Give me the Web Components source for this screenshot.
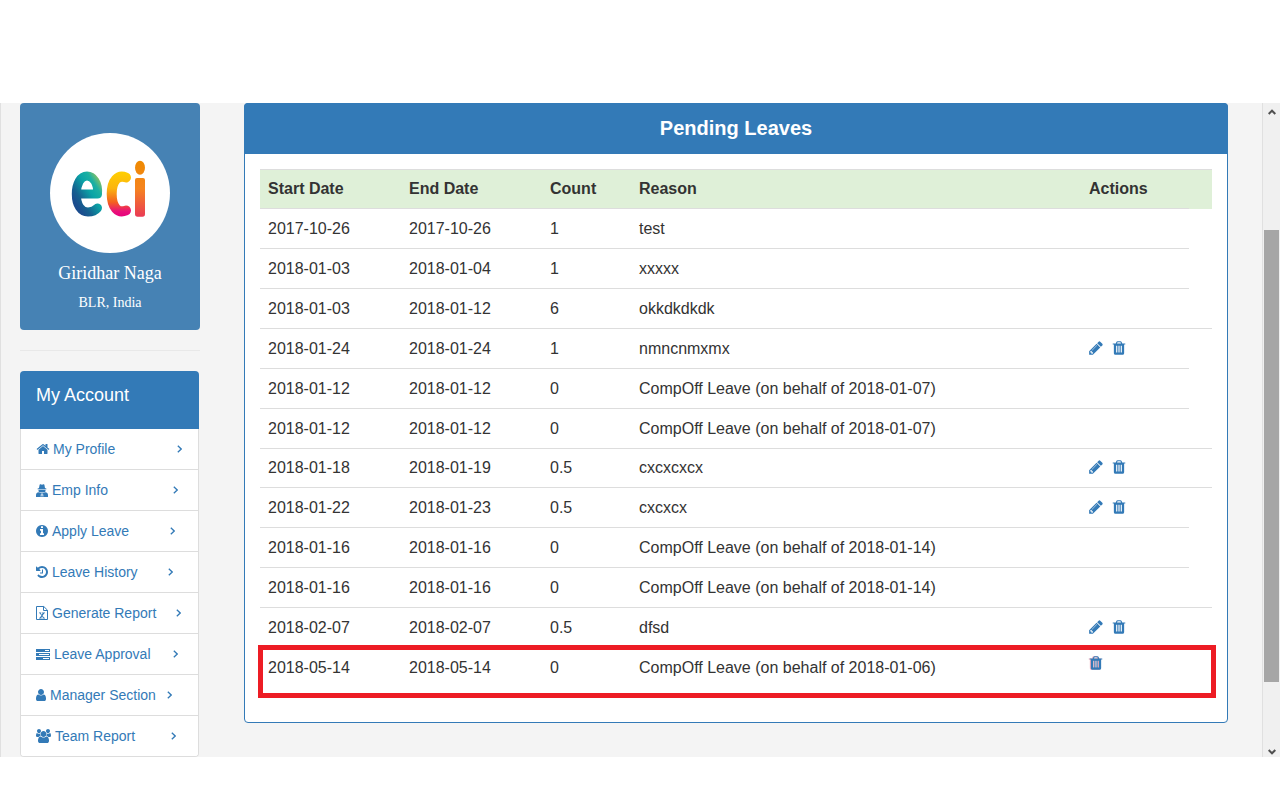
<!DOCTYPE html>
<html><head><meta charset="utf-8">
<style>
html,body{margin:0;padding:0;background:#fff;height:800px;overflow:hidden;font-family:"Liberation Sans",Arial,sans-serif;font-size:14px;color:#333}
</style></head><body>
<app-shell>
  <side-bar slot="side">
    <profile-card name="Giridhar Naga" place="BLR, India"></profile-card>
    <account-menu title="My Account">
      <menu-item icon="home" label="My Profile" right="16"></menu-item>
      <menu-item icon="secret" label="Emp Info" right="20"></menu-item>
      <menu-item icon="info" label="Apply Leave" right="23"></menu-item>
      <menu-item icon="history" label="Leave History" right="25"></menu-item>
      <menu-item icon="excel" label="Generate Report" right="17"></menu-item>
      <menu-item icon="tasks" label="Leave Approval" right="20"></menu-item>
      <menu-item icon="user" label="Manager Section" right="26"></menu-item>
      <menu-item icon="users" label="Team Report" right="22"></menu-item>
    </account-menu>
  </side-bar>
  <leaves-panel slot="main" title="Pending Leaves"></leaves-panel>
</app-shell>
<script>
const P={
home:['0 0 1792 1792','M1472 992v480q0 26-19 45t-45 19h-384v-384h-256v384h-384q-26 0-45-19t-19-45v-480q0-1 .5-3t.5-3l575-474 575 474q1 2 1 6zm223-69l-62 74q-8 9-21 11h-3q-13 0-21-7l-692-577-692 577q-12 8-24 7-13-2-21-11l-62-74q-8-10-7-23.500t11-21.500l719-599q32-26 76-26t76 26l244 204v-195q0-14 9-23t23-9h192q14 0 23 9t9 23v408l219 182q10 8 11 21.500t-7 23.500z'],
user:['0 0 1792 1792','M1536 1399q0 109-62.500 187t-150.500 78h-854q-88 0-150.500-78t-62.500-187q0-85 8.500-160.500t31.500-152 58.500-131 94-89 134.500-34.500q131 128 313 128t313-128q76 0 134.500 34.500t94 89 58.500 131 31.500 152 8.500 160.500zm-256-887q0 159-112.500 271.500t-271.500 112.500-271.500-112.500-112.500-271.500 112.500-271.500 271.500-112.500 271.500 112.500 112.500 271.500z'],
pencil:['0 0 1792 1792','M491 1536l91-91-235-235-91 91v107h128v128h107zm523-928q0-22-22-22-10 0-17 7l-542 542q-7 7-7 17 0 22 22 22 10 0 17-7l542-542q7-7 7-17zm-54-192l416 416-832 832h-416v-416zm683 96q0 53-37 90l-166 166-416-416 166-165q36-38 90-38 53 0 91 38l235 234q37 39 37 91z'],
trash:['0 0 1792 1792','M704 1376v-704q0-14-9-23t-23-9h-64q-14 0-23 9t-9 23v704q0 14 9 23t23 9h64q14 0 23-9t9-23zm256 0v-704q0-14-9-23t-23-9h-64q-14 0-23 9t-9 23v704q0 14 9 23t23 9h64q14 0 23-9t9-23zm256 0v-704q0-14-9-23t-23-9h-64q-14 0-23 9t-9 23v704q0 14 9 23t23 9h64q14 0 23-9t9-23zm-544-992h448l-48-117q-7-9-17-11h-317q-10 2-17 11zm928 32v64q0 14-9 23t-23 9h-96v948q0 83-47 143.500t-113 60.500h-832q-66 0-113-58.500t-47-141.500v-952h-96q-14 0-23-9t-9-23v-64q0-14 9-23t23-9h309l70-167q15-37 54-63t79-26h320q40 0 79 26t54 63l70 167h309q14 0 23 9t9 23z'],
users:['0 0 1920 1792','M593 896q-162 5-265 128h-134q-82 0-138-40.500t-56-118.500q0-353 124-353 6 0 43.500 21t97.500 42.500 119 21.500q67 0 133-23-5 37-5 66 0 139 81 256zm1071 637q0 120-73 189.500t-194 69.500h-874q-121 0-194-69.500t-73-189.500q0-53 3.500-103.500t14-109 26.500-108.500 43-97.500 62-81 85.500-53.500 111.500-20q10 0 43 21.500t73 48 107 48 135 21.500 135-21.500 107-48 73-48 43-21.500q61 0 111.500 20t85.500 53.500 62 81 43 97.500 26.500 108.500 14 109 3.500 103.500zm-1024-1277q0 106-75 181t-181 75-181-75-75-181 75-181 181-75 181 75 75 181zm704 384q0 159-112.500 271.500t-271.500 112.500-271.500-112.500-112.500-271.500 112.500-271.500 271.500-112.500 271.500 112.500 112.500 271.500zm576 225q0 78-56 118.500t-138 40.500h-134q-103-123-265-128 81-117 81-256 0-29-5-66 66 23 133 23 59 0 119-21.500t97.500-42.500 43.500-21q124 0 124 353zm-128-609q0 106-75 181t-181 75-181-75-75-181 75-181 181-75 181 75 75 181z'],
info:['0 0 1792 1792','M1152 1376v-160q0-14-9-23t-23-9h-96v-512q0-14-9-23t-23-9h-320q-14 0-23 9t-9 23v160q0 14 9 23t23 9h96v320h-96q-14 0-23 9t-9 23v160q0 14 9 23t23 9h448q14 0 23-9t9-23zm-128-896v-160q0-14-9-23t-23-9h-192q-14 0-23 9t-9 23v160q0 14 9 23t23 9h192q14 0 23-9t9-23zm640 416q0 209-103 385.500t-279.500 279.500-385.500 103-385.500-103-279.500-279.500-103-385.500 103-385.500 279.500-279.500 385.500-103 385.500 103 279.500 279.500 103 385.500z'],
history:['0 0 1792 1792','M1664 896q0 156-61 298t-164 245-245 164-298 61q-172 0-327-72.500t-264-204.500q-7-10-6.500-22.500t8.500-20.500l137-138q10-9 25-9 16 2 23 12 73 95 179 147t225 52q104 0 198.500-40.500t163.500-109.500 109.500-163.500 40.500-198.500-40.500-198.500-109.500-163.500-163.500-109.500-198.500-40.500q-98 0-188 35.500t-160 101.500l137 138q31 30 14 69-17 40-59 40h-448q-26 0-45-19t-19-45v-448q0-42 40-59 39-17 69 14l130 129q107-101 244.500-156.500t284.500-55.500q156 0 298 61t245 164 164 245 61 298zm-640-288v448q0 14-9 23t-23 9h-320q-14 0-23-9t-9-23v-64q0-14 9-23t23-9h224v-352q0-14 9-23t23-9h64q14 0 23 9t9 23z']
};
const W={home:13,secret:12,info:12,history:12,excel:12,tasks:14,user:10,users:15};
function svgIcon(n,w,h){
  if(n==='secret')return `<svg width="12" height="13" viewBox="0 0 12 13" fill="#337ab7"><path d="M3 4 3.600.8Q3.800 0 4.600.3L6 .7 7.400.3Q8.200 0 8.400.8L9 4l1.500.7v.5h-9v-.5z"/><path d="M2.500 5.700h7V7Q9.500 8.300 8 8.300H4Q2.500 8.300 2.500 7z"/><path fill-rule="evenodd" d="M0 13V11Q0 8.500 2.800 8.200L4.400 8.800H7.600L9.200 8.200Q12 8.500 12 11V13zM5 9.500 4.600 12.500H5.500L5.700 9.500zM6.300 9.500 6.500 12.500H7.400L7 9.500z"/></svg>`;
  if(n==='excel')return `<svg width="12" height="14" viewBox="0 0 12 14"><path d="M.5.5h7.300l3.700 3.700v9.300H.5zM7.500.5v4h4" fill="none" stroke="#337ab7"/><path d="M3 6.500h2.300v.8h-.6l1 1.500 1-1.500h-.6v-.8H9v.8h-.7L6.500 9.700l1.700 2.100H9v.7H6.500v-.7h.6l-1-1.300-1 1.300h.6v.7H3v-.7h.7l1.700-2.200L3.700 7.300H3z" fill="#337ab7"/></svg>`;
  if(n==='tasks')return `<svg width="14" height="11" viewBox="0 0 14 11" fill="#337ab7"><path d="M0 0h14v3H0zM0 4h14v3H0zM0 8h14v3H0z"/><path d="M9 1h4v1H9zM3 5h10v1H3zM7 9h6v1H7z" fill="#fff"/></svg>`;
  const [vb,d]=P[n];return `<svg width="${w}" height="${h}" viewBox="${vb}" fill="currentColor"><path d="${d}"/></svg>`;
}
function def(name,css,render){
  customElements.define(name,class extends HTMLElement{
    connectedCallback(){ if(this.shadowRoot)return; const s=this.attachShadow({mode:'open'}); s.innerHTML=`<style>${css}</style>`+render(this); }
  });
}
def('app-shell',`
:host{display:block;margin-top:103px;height:654px;background:#f4f4f4}
.wrap{display:flex;height:654px;overflow:hidden}
.line{width:1px;background:#e0e0e0;flex:none}
.side{width:180px;margin-left:19px;flex:none}
.main{width:984px;margin-left:44px;flex:none}
.bar{margin-left:auto;box-sizing:border-box;width:18px;border-left:1px solid #e0e0e0;background:#f0f0f0;display:flex;flex-direction:column;flex:none;padding:0 1px}
.btn{height:17px;display:flex;justify-content:center;align-items:center;flex:none}
.btn.dn{align-items:flex-end;padding-bottom:2px;box-sizing:border-box}
.thumb{height:452px;background:#a6a6a6;margin-top:110px;flex:none}
.fill{flex:1}
`,()=>`<div class="wrap"><div class="line"></div><div class="side"><slot name="side"></slot></div><div class="main"><slot name="main"></slot></div>
<div class="bar"><div class="btn"><svg width="8" height="6" viewBox="0 0 8 6"><path d="M.7 5 4 1.700 7.300 5" fill="none" stroke="#505050" stroke-width="2"/></svg></div><div class="thumb"></div><div class="fill"></div><div class="btn dn"><svg width="8" height="6" viewBox="0 0 8 6"><path d="M.7 1 4 4.300 7.300 1" fill="none" stroke="#505050" stroke-width="2"/></svg></div></div></div>`);
def('side-bar',`:host{display:block}`,()=>`<slot></slot>`);
def('profile-card',`
:host{display:block;height:227px;box-sizing:border-box;background:#4682b4;border-radius:4px;padding-top:30px;text-align:center;color:#fff;font-family:"Liberation Serif",serif}
.c{width:120px;height:120px;border-radius:50%;background:#fff;margin:0 auto;display:block}
.n{font-size:18px;line-height:20px;margin-top:10px}
.p{font-size:14px;line-height:16px;margin-top:12px}
`,e=>`<svg class="c" viewBox="50 133 120 120">
<defs>
<linearGradient id="ge" gradientUnits="userSpaceOnUse" x1="72" y1="198" x2="103" y2="178"><stop offset="0" stop-color="#1b4d8e"/><stop offset=".18" stop-color="#16608f"/><stop offset=".5" stop-color="#0aa3a6"/><stop offset=".72" stop-color="#1bb0a2"/><stop offset="1" stop-color="#b9c84a"/></linearGradient>
<linearGradient id="gc" gradientUnits="userSpaceOnUse" x1="120" y1="171" x2="120" y2="217"><stop offset="0" stop-color="#ffd000"/><stop offset=".38" stop-color="#fbb40f"/><stop offset=".68" stop-color="#f4601f"/><stop offset=".88" stop-color="#e9107a"/><stop offset="1" stop-color="#e6007e"/></linearGradient>
<linearGradient id="gi" gradientUnits="userSpaceOnUse" x1="140" y1="160" x2="140" y2="217"><stop offset="0" stop-color="#ee8a00"/><stop offset=".5" stop-color="#f5841f"/><stop offset="1" stop-color="#ea3a56"/></linearGradient>
</defs>
<path d="M77 194H97.500C98.500 183 93 176 87 176 80.500 176 76.300 184 76.300 194 76.300 205 81 212 88 212 92 212 95 211 97.500 208" fill="none" stroke="url(#ge)" stroke-width="9" stroke-linecap="round" stroke-linejoin="round"/>
<path d="M126 177.500C118 174 111.700 181 111.700 194 111.700 207 118 214 126 210.500" fill="none" stroke="url(#gc)" stroke-width="10" stroke-linecap="round"/>
<ellipse cx="140" cy="167.800" rx="5" ry="7" fill="url(#gi)"/>
<path d="M135 180q0-2 2-2h6q2 0 2 2v34q0 2.700-2.500 2.700h-5q-2.500 0-2.500-2.700z" fill="url(#gi)"/>
</svg><div class="n">${e.getAttribute('name')}</div><div class="p">${e.getAttribute('place')}</div>`);
def('account-menu',`
:host{display:block;margin-top:20px;border-top:1px solid #e8e8e8;padding-top:20px}
.box{width:179px}
h3{margin:0;height:58px;box-sizing:border-box;background:#337ab7;color:#fff;font-weight:400;font-size:18px;line-height:20px;padding:14px 16px;border-radius:4px 4px 0 0}
.list{border:solid #ddd;border-width:0 1px 1px;border-radius:0 0 4px 4px;background:#fff;overflow:hidden}
`,e=>`<div class="box"><h3>${e.getAttribute('title')}</h3><div class="list"><slot></slot></div></div>`);
def('menu-item',`
:host{display:block;height:41px;box-sizing:border-box;border-top:1px solid #ddd;background:#fff;color:#337ab7;font-size:14px}
:host(:first-child){border-top:0;height:40px}
a{display:flex;align-items:center;height:100%;box-sizing:border-box;padding-left:15px;color:inherit;text-decoration:none;white-space:nowrap}
.i{display:flex;justify-content:center;flex:none;margin-right:4px}
.i svg{overflow:visible;flex:none}
.c{display:flex;margin-left:auto}
`,e=>{const n=e.getAttribute('icon');return `<a style="padding-right:${e.getAttribute('right')}px"><span class="i" style="width:${W[n]}px">${svgIcon(n,n==='users'?15:14,14)}</span><span>${e.getAttribute('label')}</span><span class="c"><svg width="5" height="8" viewBox="0 0 5 8"><path d="M.8.800 4.200 4 .8 7.200" fill="none" stroke="#337ab7" stroke-width="1.300"/></svg></span></a>`});
const rows=[
['2017-10-26','2017-10-26','1','test',0],
['2018-01-03','2018-01-04','1','xxxxx',0],
['2018-01-03','2018-01-12','6','okkdkdkdk',0],
['2018-01-24','2018-01-24','1','nmncnmxmx',1],
['2018-01-12','2018-01-12','0','CompOff Leave (on behalf of 2018-01-07)',0],
['2018-01-12','2018-01-12','0','CompOff Leave (on behalf of 2018-01-07)',0],
['2018-01-18','2018-01-19','0.5','cxcxcxcx',1],
['2018-01-22','2018-01-23','0.5','cxcxcx',1],
['2018-01-16','2018-01-16','0','CompOff Leave (on behalf of 2018-01-14)',0],
['2018-01-16','2018-01-16','0','CompOff Leave (on behalf of 2018-01-14)',0],
['2018-02-07','2018-02-07','0.5','dfsd',1],
['2018-05-14','2018-05-14','0','CompOff Leave (on behalf of 2018-01-06)',2]];
def('leaves-panel',`
:host{display:block;height:620px;box-sizing:border-box;background:#fff;border:1px solid #337ab7;border-radius:4px;position:relative;font-size:16px;color:#333}
h2{margin:-1px -1px 0;height:51px;box-sizing:border-box;background:#337ab7;color:#fff;font-size:20px;line-height:22px;font-weight:700;text-align:center;padding:14px 0;border-radius:4px 4px 0 0}
.b{padding:15px}
table{table-layout:fixed;border-collapse:separate;border-spacing:0;width:952px}
th,td{padding:9px 8px 8px;line-height:22px;text-align:left;vertical-align:top;white-space:nowrap}
th{background:#dff0d8;font-weight:700;border-top:1px solid #ddd;border-bottom:1px solid #ddd;padding:8px}
th.x{border-bottom:0;padding:0}
td{border-top:1px solid #ddd}
td.e{border:0;padding:0}
tr.first td{border-top:0}
tr.tight td{padding-top:8px}
.a .ic{display:flex;height:22px;align-items:center;color:#337ab7;margin-top:-1px;margin-bottom:1px}
.a svg{flex:none;margin-left:-1px}
.a svg+svg{margin-left:7px}
.solo svg{margin-top:-8px;filter:drop-shadow(-.5px 0 0 rgba(235,70,100,.45))}
.mark{position:absolute;left:13px;top:541px;width:958px;height:53px;box-sizing:border-box;border:5px solid #ed1c24;pointer-events:none}
`,e=>`<h2>${e.getAttribute('title')}</h2><div class="b"><table><colgroup><col style="width:141px"><col style="width:141px"><col style="width:89px"><col style="width:450px"><col style="width:108px"><col style="width:23px"></colgroup>
<thead><tr><th>Start Date</th><th>End Date</th><th>Count</th><th>Reason</th><th>Actions</th><th class="x"></th></tr></thead><tbody>
${rows.map((r,i)=>`<tr class="${i==0?'first':i==6?'tight':''}"><td>${r[0]}</td><td>${r[1]}</td><td>${r[2]}</td><td>${r[3]}</td><td class="a">${r[4]==1?`<div class="ic">${svgIcon('pencil',16,16)+svgIcon('trash',16,16)}</div>`:r[4]==2?`<div class="ic solo">${svgIcon('trash',16,16)}</div>`:''}</td>${r[4]==1?'<td></td>':'<td class="e"></td>'}</tr>`).join('')}
</tbody></table></div><div class="mark"></div>`);
</script>
</body></html>
